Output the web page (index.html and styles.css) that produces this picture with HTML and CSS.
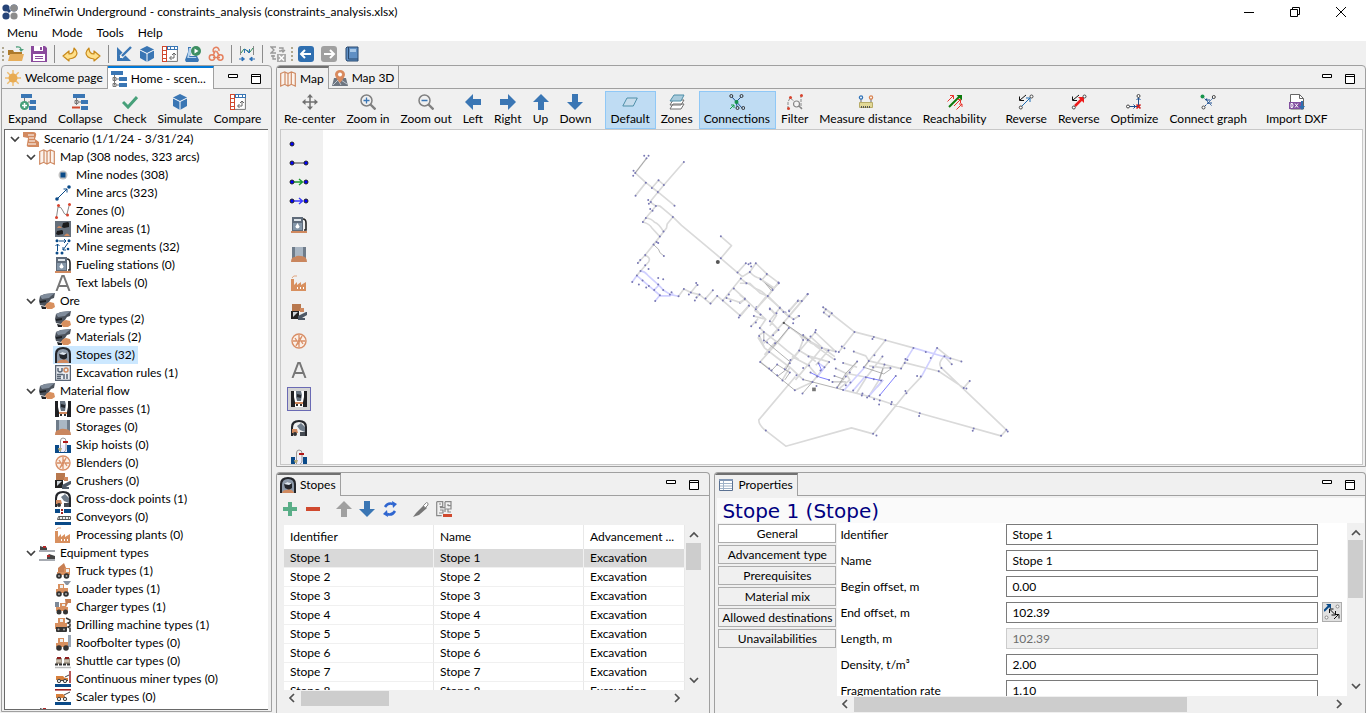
FILE: index.html
```html
<!DOCTYPE html>
<html lang="en">
<head>
<meta charset="utf-8">
<title>MineTwin Underground - constraints_analysis (constraints_analysis.xlsx)</title>
<link rel="stylesheet" href="styles.css">
</head>
<body>
<svg class="sprite" aria-hidden="true">
<symbol id="logo" viewBox="0 0 16 16"><circle cx="4" cy="4" r="3.6" fill="#264478"/><circle cx="12" cy="4" r="3.6" fill="#264478"/><circle cx="4" cy="12" r="3.6" fill="#264478"/><circle cx="12" cy="12" r="3.6" fill="#8c8c8c"/><circle cx="12" cy="4" r="3.6" fill="#8c8c8c"/><path d="M4 4l4 4" stroke="#264478" stroke-width="3"/></symbol>
<symbol id="open" viewBox="0 0 16 16"><path d="M0 4h5l1 2h8v3H0z" fill="#ad7a2c"/><path d="M0 15l2-7h14l-2 7z" fill="#e6ae5c"/><path d="M8 1q5-1 5 3" fill="none" stroke="#4f9f7c" stroke-width="1.3"/><path d="M11 3h5l-3 3z" fill="#4f9f7c"/></symbol>
<symbol id="save" viewBox="0 0 16 16"><path d="M0 0h14l2 2v14H0z" fill="#8a4a9c"/><path d="M3 0h9v5H3zM2 8h12v7H2z" fill="#fff"/><path d="M9 1h2v3H9z" fill="#8a4a9c"/><path d="M4 10.500h8M4 12.500h8" stroke="#8a4a9c"/></symbol>
<symbol id="undo" viewBox="0 0 16 16"><path d="M1 10l6-5v3q5 0 5-6 3 3 3 5 0 5-8 6v2z" fill="#ffe08a" stroke="#c88a1c" stroke-width="1.200" stroke-linejoin="round"/></symbol>
<symbol id="redo" viewBox="0 0 16 16"><path d="M15 10L9 5v3Q4 8 4 2 1 5 1 7q0 5 8 6v2z" fill="#ffe08a" stroke="#c88a1c" stroke-width="1.200" stroke-linejoin="round"/></symbol>
<symbol id="design" viewBox="0 0 16 16"><path d="M1 1l14 14H1zM4 9v3h3z" fill="#3a76b4" fill-rule="evenodd"/><path d="M15 1L5 11" stroke="#f0f0f0" stroke-width="4"/><path d="M15 1L6 10" stroke="#3a76b4" stroke-width="2.400"/></symbol>
<symbol id="cube" viewBox="0 0 16 16"><path d="M8 0l7 3.500v8.500l-7 4-7-4V3.500z" fill="#3a76b4"/><path d="M1 4l7 3.500L15 4M8 7.500V16" fill="none" stroke="#fff" stroke-width="1"/></symbol>
<symbol id="compare" viewBox="0 0 16 16"><path d="M.6.6h14.800v14.800H.6z" fill="#fff" stroke="#777"/><path d="M0 0h5v16H0z" fill="#d0492e"/><path d="M5 0h11v4H5z" fill="#3a76b4"/><path d="M1 1h3v3H1zM1 5h3v3H1zM1 9h3v3H1zM1 13h3v2H1zM6 1h2v2H6zM9 1h3v2H9zM13 1h2v2h-2z" fill="#fff"/><path d="M8 12h4V7M10 9l2-2 2 2M9.500 10L7.500 12l2 2" fill="none" stroke="#666"/></symbol>
<symbol id="flask" viewBox="0 0 16 16"><path d="M3 1v5l-3 8 1 2h12l1-2-2-4H5L6 6V1zM3 1h4" fill="#3a76b4"/><path d="M4 2h2v5L4 11h7l1 2H2z" fill="#b8d4ee"/><path d="M2 12h10l1 3H1z" fill="#3a76b4"/><circle cx="11" cy="5" r="5" fill="#3d8f62"/><path d="M9.500 2.500L13.500 5l-4 2.500z" fill="#fff"/></symbol>
<symbol id="hook" viewBox="0 0 16 16"><g fill="none" stroke="#e5805f" stroke-width="1.500"><path d="M6 6.500A3 3 0 1 1 11 5"/><path d="M7.500 4.500L5 9.500"/><path d="M8.500 5l3 5"/><circle cx="4" cy="11.500" r="2.700"/><circle cx="12.300" cy="11.500" r="2.700"/><path d="M5 11.500h7"/></g></symbol>
<symbol id="link" viewBox="0 0 16 16"><path d="M1.500 0v9M14.500 0v9" stroke="#888"/><path d="M2 7l3-4 6 3 3-4" fill="none" stroke="#2f8f5b"/><path d="M5.500 3v4M10.500 3v4M6 3l4 4" stroke="#2f72b8" fill="none"/><path d="M0 13h5M3 11l2.500 2L3 15zM16 13h-5M13 11l-2.500 2 2.500 2z" stroke="#2f72b8" fill="#2f72b8"/></symbol>
<symbol id="formula" viewBox="0 0 16 16"><path d="M6 1H1l3 3-3 3h5M9 2h4v3M11 4l2 2 2-2M9 5h2M3 9v4h3M1 10h4" fill="none" stroke="#999" stroke-width="1.300"/><path d="M7 8h9v8H7z" fill="#aaa"/><path d="M9 9.500l5 5M14 9.500l-5 5" stroke="#fff" stroke-width="1.500"/></symbol>
<symbol id="back" viewBox="0 0 16 16"><rect width="16" height="16" rx="3" fill="#2f6fb0"/><path d="M3 8h10M7 4L3 8l4 4" fill="none" stroke="#fff" stroke-width="2"/></symbol>
<symbol id="fwd" viewBox="0 0 16 16"><rect width="16" height="16" rx="3" fill="#a0a0a0"/><path d="M3 8h10M9 4l4 4-4 4" fill="none" stroke="#fff" stroke-width="2"/></symbol>
<symbol id="book" viewBox="0 0 16 16"><path d="M3 1h11v14H3q-1-1-1-2V2z" fill="#5f8fc4" stroke="#28486e"/><path d="M4.500 1v12H14" stroke="#28486e" fill="none"/><path d="M6 3h6v3H6z" fill="#a8c8e8"/></symbol>
<symbol id="sun" viewBox="0 0 16 16"><path d="M8 0v16M0 8h16M2.300 2.300l11.400 11.400M13.700 2.300L2.300 13.700" stroke="#edbc70" stroke-width="1.400"/><circle cx="8" cy="8" r="4.500" fill="#e8ab52"/></symbol>
<symbol id="home" viewBox="0 0 16 16"><path d="M0 0h12v4H0zM8 6h8v4H8zM8 12h8v4H8z" fill="#3a76b4"/><path d="M3.500 4v10.500M2 6.500h3v3H2zM2 12.500h3v3H2zM5 8h3M5 14h3" fill="#f4f4f4" stroke="#777"/></symbol>
<symbol id="expand" viewBox="0 0 16 16"><path d="M1 0h11v4H1zM10 6h6v4h-6zM9 12h7v4H9z" fill="#3a76b4"/><path d="M4.500 4v3M8 8h2" stroke="#777"/><circle cx="4.500" cy="11.500" r="4.500" fill="#47a07a"/><path d="M4.500 9v5M2 11.500h5" stroke="#fff" stroke-width="1.500"/></symbol>
<symbol id="collapse" viewBox="0 0 16 16"><path d="M1 0h12v4H1zM9 6h7v4H9zM9 12h7v4H9z" fill="#3a76b4"/><path d="M4.500 4v7M3 6.500h3v3H3zM6 8h3" fill="#f4f4f4" stroke="#777"/><path d="M0 12.500h8v2H0z" fill="#d0492e"/></symbol>
<symbol id="check" viewBox="0 0 16 16"><path d="M1 8l5 5 9-10" fill="none" stroke="#47a07a" stroke-width="3"/></symbol>
<symbol id="map" viewBox="0 0 16 16"><path d="M.7 2.500l4-1.700 3.300 1.700 3.300-1.700 4 1.700v12.500l-4-1.700-3.300 1.700-3.300-1.700-4 1.700zM5 1v12M8 2.500v12M11.300 1v12" fill="#fbf3ed" stroke="#cf8a62" stroke-width="1.200"/></symbol>
<symbol id="pin" viewBox="0 0 16 16"><path d="M2 8h12l2 8H0z" fill="#6d7580"/><path d="M1 15l5-5 3 5M9 10l6 4" stroke="#c0c8d0" fill="none"/><path d="M8 13Q3 7 3 4.500a5 4.500 0 0 1 10 0Q13 7 8 13z" fill="#d98a5e"/><circle cx="8" cy="4.500" r="2" fill="#fff"/></symbol>
<symbol id="move" viewBox="0 0 16 16"><path d="M8 1v14M1 8h14" stroke="#707070" stroke-width="1.500"/><path d="M8 0l3 3.500H5zM8 16l3-3.500H5zM0 8l3.500-3v6zM16 8l-3.500-3v6z" fill="#707070"/></symbol>
<symbol id="zin" viewBox="0 0 16 16"><circle cx="6.500" cy="6.500" r="5.500" fill="none" stroke="#808080" stroke-width="1.500"/><path d="M10.500 10.500l5 5" stroke="#808080" stroke-width="2.400"/><path d="M6.500 3.500v6M3.500 6.500h6" stroke="#3a76b4" stroke-width="1.300"/></symbol>
<symbol id="zout" viewBox="0 0 16 16"><circle cx="6.500" cy="6.500" r="5.500" fill="none" stroke="#808080" stroke-width="1.500"/><path d="M10.500 10.500l5 5" stroke="#808080" stroke-width="2.400"/><path d="M3.500 6.500h6" stroke="#3a76b4" stroke-width="1.300"/></symbol>
<symbol id="left" viewBox="0 0 16 16"><path d="M0 8l8-8v5h8v6H8v5z" fill="#3a76b4"/></symbol>
<symbol id="right" viewBox="0 0 16 16"><path d="M16 8L8 0v5H0v6h8v5z" fill="#3a76b4"/></symbol>
<symbol id="up" viewBox="0 0 16 16"><path d="M8 0l8 8h-5v8H5V8H0z" fill="currentColor"/></symbol>
<symbol id="down" viewBox="0 0 16 16"><path d="M8 16l8-8h-5V0H5v8H0z" fill="#3a76b4"/></symbol>
<symbol id="default" viewBox="0 0 16 16"><path d="M5 4h10.300l-4 8H.8z" fill="#c6dcec" stroke="#4f8fa8"/></symbol>
<symbol id="layers" viewBox="0 0 16 16"><g stroke="#707070" fill="#fff"><path d="M4 10h11l-3 5H1zM4 6h11l-3 5H1z"/><path d="M5 1h10l-3 6H1z" fill="#a9cbdc" stroke="#4f8fa8"/></g></symbol>
<symbol id="conn" viewBox="0 0 16 16"><path d="M2.500 2.500l11 12M12.500 2.500L7 8l1.500 6" stroke="#1d4f90" fill="none"/><g fill="#bfdcf3" stroke="#333"><circle cx="2.300" cy="2" r="1.500"/><circle cx="12.500" cy="2" r="1.500"/><circle cx="8.500" cy="14" r="1.500"/><circle cx="14.300" cy="14" r="1.500"/></g><circle cx="7.500" cy="8" r="2" fill="#16934b"/><path d="M1 15l4-4M2 11h3v3" stroke="#16a34b" fill="none"/></symbol>
<symbol id="filter" viewBox="0 0 16 16"><path d="M1 15V8l2-4 4 3M14 1v13" stroke="#888" fill="none" stroke-dasharray="3 1"/><circle cx="9.500" cy="10" r="3" fill="#f4f4f4" stroke="#888" stroke-width="1.200"/><path d="M12 12l3 3" stroke="#888" stroke-width="1.500"/><g fill="#d8442e"><circle cx="1.500" cy="14.500" r="1.500"/><circle cx="3.500" cy="3.500" r="1.500"/><circle cx="14.500" cy="1.500" r="1.500"/></g></symbol>
<symbol id="measure" viewBox="0 0 16 16"><path d="M3 4v4M13 4v4" stroke="#666"/><circle cx="3" cy="3.500" r="1.600" fill="#fff" stroke="#2f72b8" stroke-width="1.300"/><circle cx="13" cy="3.500" r="1.600" fill="#fff" stroke="#d9824f" stroke-width="1.300"/><path d="M1.500 8.500h13v5h-13z" fill="#e2d896" stroke="#b8ac68"/><path d="M3.500 14v-2M5.500 14v-2M7.500 14v-2M9.500 14v-2M11.500 14v-2" stroke="#555"/></symbol>
<symbol id="reach" viewBox="0 0 16 16"><path d="M2 13L13 2" stroke="#0c7a0c" stroke-width="2"/><path d="M9.500 1H15v5.500z" fill="#0c7a0c"/><path d="M.5 7.500l6-6M3 1.500h3.500V5M7 12l6.500-6.500M10.500 5.500h3V9M9.500 15.500l5.500-5.500M12 10h3v3" fill="none" stroke="#e8322a"/></symbol>
<symbol id="rev" viewBox="0 0 16 16"><path d="M4 12l8-8M8 4h4v4" fill="none" stroke="#1d6ab0"/><path d="M8 1L2 6M1.500 2.500V6.500H6" fill="none" stroke="#111"/><circle cx="2.800" cy="13.500" r="1.500" fill="#fff" stroke="#444"/><circle cx="13.500" cy="2.500" r="1.500" fill="#fff" stroke="#444"/></symbol>
<symbol id="revred" viewBox="0 0 16 16"><path d="M4 12l7-7" stroke="#ee1c1c" stroke-width="2.500"/><path d="M7 3h6v6z" fill="#ee1c1c"/><path d="M8 1L2 6M1.500 2.500V6.500H6" fill="none" stroke="#111"/><circle cx="2.800" cy="13.500" r="1.500" fill="#fff" stroke="#444"/><circle cx="13.500" cy="2.500" r="1.500" fill="#fff" stroke="#444"/></symbol>
<symbol id="optimize" viewBox="0 0 16 16"><path d="M12.500 3v9M2 12.500h10M10.500 6l2-2 2 2M7.500 10.500l2 2-2 2" fill="none" stroke="#1d4f90"/><circle cx="12.500" cy="2" r="1.500" fill="#fff" stroke="#444"/><circle cx="2" cy="12.500" r="1.500" fill="#fff" stroke="#444"/><path d="M10.500 10.500l4 4M14.500 10.500l-4 4" stroke="#d02020" stroke-width="1.700"/></symbol>
<symbol id="cgraph" viewBox="0 0 16 16"><path d="M3 3l9 9M5 12l8-8M7 9h5M9 5v6" stroke="#1d4f90" stroke-dasharray="2 1"/><path d="M5 6l3 1-1-3z" fill="#1d4f90"/><circle cx="2.500" cy="2.500" r="2" fill="#16934b"/><circle cx="3.500" cy="13.500" r="1.500" fill="#fff" stroke="#444"/><circle cx="13.800" cy="3" r="1.500" fill="#fff" stroke="#444"/></symbol>
<symbol id="dxf" viewBox="0 0 16 16"><path d="M1.500.5h9l4 4V15h-13z" fill="#fff" stroke="#666"/><path d="M10.500.5v4h4" fill="none" stroke="#666"/><path d="M0 8h14v7H0z" fill="#8250a0"/><path d="M2 9.500v4h1.500q1-2 0-4zM6 9.500l3 4M9 9.500l-3 4" stroke="#fff" fill="none"/><path d="M12 7h2v5h2l-3 4-3-4h2z" fill="#2f6fb0"/></symbol>
<symbol id="scroll" viewBox="0 0 16 16"><path d="M0 1h10q4 0 3 4l-1 3 4 3v5H6q-3 0-2-3l1-6-5-1z" fill="#d28a60"/><path d="M5 4h6M6 7h5M6 10h6M5 13h8" stroke="#fff"/></symbol>
<symbol id="node" viewBox="0 0 16 16"><circle cx="8" cy="8" r="4.500" fill="#c2c2c2"/><path d="M5.500 5.500h5v5h-5z" fill="#0a4a88"/></symbol>
<symbol id="arc" viewBox="0 0 16 16"><path d="M2 14L12 4M8.500 4H12v3.500" stroke="#0a4a88" stroke-width="1" fill="none"/><circle cx="2" cy="14" r="1.800" fill="#0a4a88"/><circle cx="14" cy="2" r="1.800" fill="#0a4a88"/></symbol>
<symbol id="zone" viewBox="0 0 16 16"><path d="M1.500 14L3 4q3-1 5 4t4 3l2-8" fill="none" stroke="#888"/><g fill="#d8442e"><circle cx="1.500" cy="14.500" r="1.500"/><circle cx="3.500" cy="2.500" r="1.500"/><circle cx="12.500" cy="12" r="1.500"/><circle cx="14.500" cy="1.500" r="1.500"/></g></symbol>
<symbol id="area" viewBox="0 0 16 16"><path d="M0 0h16v16H0z" fill="#66707c"/><path d="M8 2l5-1 1 1v4l-5 1-2-1zM2 10l5-1 1 1v3l-5 1-2-1z" fill="#1c1c1e"/><path d="M2 7q2-4 5 0zM9 15q3-5 6 0z" fill="#d08a60"/></symbol>
<symbol id="segment" viewBox="0 0 16 16"><path d="M4 2h7M9 0l2 2-2 2M2.500 12V5M.5 7l2-2 2 2M13 4L8 11M8 8v3h3" stroke="#0a4a88" fill="none" stroke-width="1"/><g fill="#0a4a88"><circle cx="2" cy="1.800" r="1.500"/><circle cx="14" cy="1.800" r="1.500"/><circle cx="2" cy="14" r="1.500"/><circle cx="7" cy="14" r="1.500"/><circle cx="13" cy="10" r="1.300"/></g></symbol>
<symbol id="fuel" viewBox="0 0 16 16"><path d="M0 14h16v2H0z" fill="#d08a60"/><path d="M1 0h11v14H1z" fill="#5f6b7a"/><path d="M3 2h7v2H3z" fill="#dfe5ea"/><path d="M2 6h9v7H2z" fill="#8496a8"/><path d="M6.500 6l2 3.500a2 2 0 1 1-4 0z" fill="#fff"/><path d="M12 2q3 0 3 4v7h-2" fill="none" stroke="#222" stroke-width="1.600"/></symbol>
<symbol id="letter" viewBox="0 0 16 16"><path d="M1.500 16L7.200 1h1.600l5.700 15M4 11h8" fill="none" stroke="#777" stroke-width="2"/></symbol>
<symbol id="ore" viewBox="0 0 16 16"><path d="M1 3l5-2 10-1-1 5-3 1-2 3-4 4-5-1-1-4z" fill="#4b525c"/><path d="M1 3l5-2 10-1-4 3-2 2-7 1z" fill="#808c9b"/><path d="M1 8l6-1v2l-6 1zM2 13l5 1v2H3z" fill="#1e2024"/><path d="M6 13l2-3 3-1 4 1 1 4-3 2H8z" fill="#d8905f"/></symbol>
<symbol id="stope" viewBox="0 0 16 16"><path d="M0 16V7q0-7 8-7t8 7v9z" fill="#24262b"/><path d="M2 16V8q0-6 6-6t6 6v8z" fill="#8d9aaa"/><path d="M4 7l3-2 5 1v5l-3 2-4-2z" fill="#23262c"/><path d="M4 7l3-2 5 1-3 2z" fill="#dfe8f2"/><path d="M2 16q1-3 4-3 6-2 8 3z" fill="#d08a60"/></symbol>
<symbol id="rules" viewBox="0 0 16 16"><path d="M.6.6h14.800v14.800H.6z" fill="#e9edf2" stroke="#5b6675" stroke-width="1.300"/><path d="M3 3v3q2 2 4 0V3M2 9.500h6M2 11.500h4M2 13.500h4M9 9v5M12 9v5" fill="none" stroke="#5b6675" stroke-width="1.500"/><circle cx="11" cy="5" r="2" fill="none" stroke="#d08a60" stroke-width="1.500"/></symbol>
<symbol id="pass" viewBox="0 0 16 16"><path d="M0 0h16v16H0z" fill="#fff"/><path d="M0 0h3v6l1 5v5H0zM16 0h-3v6l-1 5v5h4z" fill="#1e1f22"/><path d="M5 0h5l1 4-1 6H6L5 6z" fill="#66727f"/><path d="M6 3l4 1v3l-4-1z" fill="#23262c"/><path d="M4 11h8v2H4z" fill="#d08a60"/><path d="M5 13h2v2H5zM9 13h2v2H9z" fill="#333"/></symbol>
<symbol id="storage" viewBox="0 0 16 16"><path d="M1 1h14v12H1z" fill="#6f7c8a"/><path d="M4 1h8v11H4z" fill="#aab7c4"/><path d="M0 16q0-5 4-5 2-2 6-1 6 0 6 6z" fill="#c9865e"/></symbol>
<symbol id="skip" viewBox="0 0 16 16"><path d="M0 8h16v8H0z" fill="#0a4a88"/><path d="M4 8h8v7H4z" fill="#eef"/><path d="M5.500 15V4q0-3 2.500-3 3 0 3 3v8q0 2-2 3" fill="none" stroke="#999"/><path d="M8 4h5v2H8z" fill="#b01818"/><path d="M3 11h4l-1 3H4z" fill="#b8ac78"/></symbol>
<symbol id="blender" viewBox="0 0 16 16"><circle cx="8" cy="8" r="7" fill="#fbf0e8" stroke="#d88e66" stroke-width="1.400"/><path d="M8 2v4l3-2M14 8h-4l2 3M8 14v-4l-3 2M2 8h4L4 5M11 3l-2 4M5 13l2-4" stroke="#d88e66" stroke-width="1.300" fill="none"/><circle cx="8" cy="8" r="1.500" fill="#d88e66"/></symbol>
<symbol id="crusher" viewBox="0 0 16 16"><path d="M1 0h9v7H1z" fill="#b8784e"/><path d="M9 4h4v4H9z" fill="#d08a60"/><path d="M0 7h8v8H0z" fill="#222"/><path d="M2 13l5-5H2z" fill="#cfd5da"/><path d="M7 12l8-4h1v3l-5 3h3v2H7z" fill="#4e5966"/></symbol>
<symbol id="dock" viewBox="0 0 16 16"><path d="M0 16V7q0-7 8-7t8 7v9h-2V8q0-6-6-6T2 8v8z" fill="#24262b"/><path d="M6 6l4-3 4 4v5L9 10z" fill="#6f7c8a"/><path d="M1 9h5l1 4H1z" fill="#d08a60"/><circle cx="4" cy="14" r="2" fill="#333"/><path d="M9 12h5v4H9z" fill="#454a52"/></symbol>
<symbol id="conveyor" viewBox="0 0 16 16"><path d="M0 0h16v4H0zM0 13h16v3H0z" fill="#0a4a88"/><path d="M5 0h4v5H5z" fill="#fff"/><path d="M6 0h2v2H6zM6 3h2v2H6z" fill="#a02020"/><path d="M3.500 7.500h12v3h-13z" fill="#eee" stroke="#555"/><path d="M4 9h11" stroke="#777" stroke-width="2" stroke-dasharray="1 2"/></symbol>
<symbol id="plant" viewBox="0 0 16 16"><path d="M0 16V4h3v6l3-3v3l4-3v3l5-3v9z" fill="#d8905f"/><path d="M1 3q1-3 5-2" fill="none" stroke="#e0a580"/><path d="M6 12h1v2H6zM9 12h1v2H9zM12 12h1v2h-1z" fill="#fff"/></symbol>
<symbol id="equip" viewBox="0 0 16 16"><path d="M0 6h16M0 15h16" stroke="#8b9099" stroke-width="1.500"/><path d="M1 1l3 1 2-1 2 2v2H1zM8 11l2-2 3 1 3 1v3H8z" fill="#444"/><path d="M4 1h3v2H4zM8 10h3v2H8z" fill="#b02828"/></symbol>
<symbol id="truck" viewBox="0 0 16 16"><path d="M3 5l6-5 2 5-1 5H3z" fill="#c87f52"/><path d="M9 5h6v7H2V9h7z" fill="#d8905f"/><path d="M11 6h3v3h-3z" fill="#eee"/><circle cx="4" cy="13" r="2.800" fill="#333"/><circle cx="11.500" cy="13" r="2.800" fill="#333"/><circle cx="4" cy="13" r="1" fill="#aaa"/><circle cx="11.500" cy="13" r="1" fill="#aaa"/></symbol>
<symbol id="loader" viewBox="0 0 16 16"><path d="M3 3h6v4h4v5H1V8h2z" fill="#d8905f"/><path d="M5 4h3v3H5z" fill="#eee"/><path d="M8 0h8l-3 4h-2z" fill="#8a94a2"/><circle cx="4" cy="13" r="2.800" fill="#333"/><circle cx="11" cy="13" r="2.800" fill="#333"/><circle cx="4" cy="13" r="1" fill="#aaa"/><circle cx="11" cy="13" r="1" fill="#aaa"/></symbol>
<symbol id="charger" viewBox="0 0 16 16"><path d="M5 4h6v4h2v4H1V8h4z" fill="#d8905f"/><path d="M0 3h4v5H0z" fill="#7d8998"/><path d="M10 0h6v4h-3l-2 4" fill="#c87f52"/><path d="M7 5h3v2H7z" fill="#eee"/><circle cx="4" cy="13" r="2.500" fill="#333"/><circle cx="10.500" cy="13" r="2.500" fill="#333"/></symbol>
<symbol id="drill" viewBox="0 0 16 16"><path d="M3 1h7v5h2v6H0V6h3z" fill="#d8905f"/><path d="M5 2h3v3H5z" fill="#eee"/><path d="M1 10h11v4q0 1-1 1H2q-1 0-1-1z" fill="#333"/><circle cx="3.500" cy="12.500" r="1" fill="#aaa"/><circle cx="9" cy="12.500" r="1" fill="#aaa"/><path d="M11 1l4 2v2l-2 1 2 1v2l-2 1 2 1v4" stroke="#333" stroke-width="1.500" fill="none"/></symbol>
<symbol id="bolter" viewBox="0 0 16 16"><path d="M3 3h6v4h4v5H1V8h2z" fill="#d8905f"/><path d="M5 4h3v3H5z" fill="#eee"/><path d="M13 0h3v12h-3z" fill="#9aa6b4"/><circle cx="4" cy="13" r="2.800" fill="#333"/><circle cx="11" cy="13" r="2.800" fill="#333"/></symbol>
<symbol id="shuttle" viewBox="0 0 16 16"><path d="M1 5h6v6H1zM9 5h6v6H9z" fill="#a89c8c"/><path d="M2 4h4v2H2zM10 4h4v2h-4z" fill="#8c1c1c"/><path d="M1 8h5M9 8h5" stroke="#e8e0d0"/><path d="M0 11.500h16" stroke="#333" stroke-width="2" stroke-dasharray="3 1"/><path d="M0 14.500h16" stroke="#bbb" stroke-width="1.500"/></symbol>
<symbol id="miner" viewBox="0 0 16 16"><path d="M0 13h16v3H0z" fill="#0a4a88"/><path d="M15 0v12" stroke="#a02020" stroke-width="1.500"/><path d="M1 5h7l2 2h3v2H1z" fill="#d8803c"/><path d="M2 9.500h11" stroke="#444"/><circle cx="4" cy="10" r="1.700" fill="#ddd" stroke="#444"/><circle cx="10" cy="10" r="1.700" fill="#ddd" stroke="#444"/><path d="M10 6l4-2" stroke="#444"/></symbol>
<symbol id="scaler" viewBox="0 0 16 16"><path d="M0 13h16v3H0z" fill="#0a4a88"/><path d="M0 .800h16" stroke="#a02020" stroke-width="1.600"/><path d="M1 5h7l2 2v2H1z" fill="#d8803c"/><circle cx="4" cy="10" r="1.700" fill="#ddd" stroke="#444"/><circle cx="10" cy="10" r="1.700" fill="#ddd" stroke="#444"/><path d="M9 6l6-3" stroke="#444"/></symbol>
<symbol id="pnode" viewBox="0 0 20 8"><circle cx="3" cy="4" r="2" fill="#00f" stroke="#222"/></symbol>
<symbol id="parc" viewBox="0 0 20 8"><path d="M3 4h14" stroke="#777" stroke-width="1.600"/><circle cx="3" cy="4" r="2" fill="#00f" stroke="#222"/><circle cx="17" cy="4" r="2" fill="#00f" stroke="#222"/></symbol>
<symbol id="pdir" viewBox="0 0 20 8"><path d="M5 4h8M10 1l3.500 3L10 7" fill="none" stroke="currentColor" stroke-width="1.400"/><circle cx="3" cy="4" r="2" fill="#00f" stroke="#222"/><circle cx="17" cy="4" r="2" fill="#00f" stroke="#222"/></symbol>
<symbol id="plus" viewBox="0 0 16 16"><path d="M6 1h4v5h5v4h-5v5H6v-5H1V6h5z" fill="#5aae88"/></symbol>
<symbol id="minus" viewBox="0 0 16 16"><path d="M1 6h14v4H1z" fill="#d0492e"/></symbol>
<symbol id="refresh" viewBox="0 0 16 16"><path d="M3 6q3-5 8-3M13 10q-3 5-8 3" fill="none" stroke="#2f66d0" stroke-width="2.500"/><path d="M10 0l5 3-4 4zM6 16l-5-3 4-4z" fill="#2f66d0"/></symbol>
<symbol id="pencil" viewBox="0 0 16 16"><path d="M0 16l3-4L11 4l3 3-8 7z" fill="#777"/><path d="M10.500 4.500l3-3q2 0 1.500 2.500l-3 3z" fill="#fff" stroke="#888"/></symbol>
<symbol id="maze" viewBox="0 0 16 16"><path d="M.7.7h6v5h-3M9 .7h6v4h-3M9 .7v6H4M15 5v3H9v3M.7.7v14h5M4 9h3v3H3M12 3v2M3 3h2M12 8v3h3" fill="none" stroke="#888" stroke-width="1.200"/><path d="M7 13h9v3H7z" fill="#d0492e"/></symbol>
<symbol id="sheet" viewBox="0 0 16 16"><path d="M1.500 2.500h13v11h-13z" fill="#fff" stroke="#5a7192"/><path d="M1 2h14v2H1z" fill="#8297b4"/><path d="M2 6.500h12M2 9h12M2 11.500h12M5.500 4v9" stroke="#9fb2c8"/></symbol>
<symbol id="swap" viewBox="0 0 16 16"><path d="M0 7l5-5" stroke="#0a4a88" stroke-width="2"/><path d="M2 0h5v5z" fill="#0a4a88"/><path d="M6 5.500l5 5M5.500 9V5H9.500M7.500 11H11.500V7M10 15l4-4M11 10.500h4v4" fill="none" stroke="#111"/><circle cx="13.500" cy="2.500" r="1.500" fill="#fff" stroke="#888"/><circle cx="2.500" cy="13.500" r="1.500" fill="#fff" stroke="#888"/></symbol>
<symbol id="vmin" viewBox="0 0 12 12"><path d="M1.500 1.500h9v3h-9z" fill="#fff" stroke="#000"/></symbol>
<symbol id="vmax" viewBox="0 0 12 12"><path d="M1.500 1.500h9v9h-9z" fill="#fff" stroke="#000"/><path d="M1 3.500h10" stroke="#000"/></symbol>
<symbol id="wmin" viewBox="0 0 12 12"><path d="M1 6.500h10" stroke="#000"/></symbol>
<symbol id="wrest" viewBox="0 0 12 12"><path d="M1.500 3.500h7v7h-7zM3.500 3.500v-2h7v7h-2" fill="none" stroke="#000"/></symbol>
<symbol id="wclose" viewBox="0 0 12 12"><path d="M1 1l10 10M11 1L1 11" stroke="#000"/></symbol>
<symbol id="chev" viewBox="0 0 10 10"><path d="M1 3l4 4 4-4" fill="none" stroke="currentColor" stroke-width="1.700"/></symbol>
</svg>

<header class="titlebar">
  <svg class="icon"><use href="#logo"/></svg>
  <h1 class="app-title">MineTwin Underground - constraints_analysis (constraints_analysis.xlsx)</h1>
  <div class="window-buttons">
    <button aria-label="Minimize window"><svg><use href="#wmin"/></svg></button>
    <button aria-label="Restore window"><svg><use href="#wrest"/></svg></button>
    <button aria-label="Close window"><svg><use href="#wclose"/></svg></button>
  </div>
</header>
<nav class="menubar"><button>Menu</button><button>Mode</button><button>Tools</button><button>Help</button></nav>
<div class="toolbar" role="toolbar" aria-label="Main">
  <span class="grip"></span>
  <button aria-label="Open"><svg class="icon"><use href="#open"/></svg></button>
  <button aria-label="Save"><svg class="icon"><use href="#save"/></svg></button>
  <span class="sep"></span>
  <button aria-label="Undo"><svg class="icon"><use href="#undo"/></svg></button>
  <button aria-label="Redo"><svg class="icon"><use href="#redo"/></svg></button>
  <span class="sep"></span>
  <button aria-label="Design"><svg class="icon"><use href="#design"/></svg></button>
  <button aria-label="Simulate"><svg class="icon"><use href="#cube"/></svg></button>
  <button aria-label="Compare"><svg class="icon"><use href="#compare"/></svg></button>
  <button aria-label="Experiment"><svg class="icon"><use href="#flask"/></svg></button>
  <button aria-label="Integration"><svg class="icon"><use href="#hook"/></svg></button>
  <span class="sep"></span>
  <button aria-label="Connect"><svg class="icon"><use href="#link"/></svg></button>
  <span class="sep"></span>
  <button aria-label="Formula"><svg class="icon"><use href="#formula"/></svg></button>
  <span class="grip"></span>
  <button aria-label="Back"><svg class="icon"><use href="#back"/></svg></button>
  <button aria-label="Forward"><svg class="icon"><use href="#fwd"/></svg></button>
  <button aria-label="Manual"><svg class="icon"><use href="#book"/></svg></button>
</div>

<main class="workbench">
  <section class="view sidebar" aria-label="Home">
    <div class="tabs">
      <button class="tab"><svg class="icon"><use href="#sun"/></svg>Welcome page</button>
      <button class="tab active focused"><svg class="icon"><use href="#home"/></svg>Home - scen...</button>
      <span class="view-buttons"><button aria-label="Minimize"><svg><use href="#vmin"/></svg></button><button aria-label="Maximize"><svg><use href="#vmax"/></svg></button></span>
    </div>
    <div class="actions">
      <button><svg class="icon"><use href="#expand"/></svg>Expand</button>
      <button><svg class="icon"><use href="#collapse"/></svg>Collapse</button>
      <button><svg class="icon"><use href="#check"/></svg>Check</button>
      <button><svg class="icon"><use href="#cube"/></svg>Simulate</button>
      <button><svg class="icon"><use href="#compare"/></svg>Compare</button>
    </div>
    <div class="tree">
      <ul>
        <li><div class="row"><svg class="twist"><use href="#chev"/></svg><svg class="icon"><use href="#scroll"/></svg><span>Scenario (1/1/24 - 3/31/24)</span></div>
        <ul>
          <li><div class="row"><svg class="twist"><use href="#chev"/></svg><svg class="icon"><use href="#map"/></svg><span>Map (308 nodes, 323 arcs)</span></div>
            <ul>
              <li class="row leaf"><svg class="icon"><use href="#node"/></svg><span>Mine nodes (308)</span></li>
              <li class="row leaf"><svg class="icon"><use href="#arc"/></svg><span>Mine arcs (323)</span></li>
              <li class="row leaf"><svg class="icon"><use href="#zone"/></svg><span>Zones (0)</span></li>
              <li class="row leaf"><svg class="icon"><use href="#area"/></svg><span>Mine areas (1)</span></li>
              <li class="row leaf"><svg class="icon"><use href="#segment"/></svg><span>Mine segments (32)</span></li>
              <li class="row leaf"><svg class="icon"><use href="#fuel"/></svg><span>Fueling stations (0)</span></li>
              <li class="row leaf"><svg class="icon"><use href="#letter"/></svg><span>Text labels (0)</span></li>
            </ul></li>
          <li><div class="row"><svg class="twist"><use href="#chev"/></svg><svg class="icon"><use href="#ore"/></svg><span>Ore</span></div>
            <ul>
              <li class="row leaf"><svg class="icon"><use href="#ore"/></svg><span>Ore types (2)</span></li>
              <li class="row leaf"><svg class="icon"><use href="#ore"/></svg><span>Materials (2)</span></li>
              <li class="row leaf selected"><svg class="icon"><use href="#stope"/></svg><span>Stopes (32)</span></li>
              <li class="row leaf"><svg class="icon"><use href="#rules"/></svg><span>Excavation rules (1)</span></li>
            </ul></li>
          <li><div class="row"><svg class="twist"><use href="#chev"/></svg><svg class="icon"><use href="#ore"/></svg><span>Material flow</span></div>
            <ul>
              <li class="row leaf"><svg class="icon"><use href="#pass"/></svg><span>Ore passes (1)</span></li>
              <li class="row leaf"><svg class="icon"><use href="#storage"/></svg><span>Storages (0)</span></li>
              <li class="row leaf"><svg class="icon"><use href="#skip"/></svg><span>Skip hoists (0)</span></li>
              <li class="row leaf"><svg class="icon"><use href="#blender"/></svg><span>Blenders (0)</span></li>
              <li class="row leaf"><svg class="icon"><use href="#crusher"/></svg><span>Crushers (0)</span></li>
              <li class="row leaf"><svg class="icon"><use href="#dock"/></svg><span>Cross-dock points (1)</span></li>
              <li class="row leaf"><svg class="icon"><use href="#conveyor"/></svg><span>Conveyors (0)</span></li>
              <li class="row leaf"><svg class="icon"><use href="#plant"/></svg><span>Processing plants (0)</span></li>
            </ul></li>
          <li><div class="row"><svg class="twist"><use href="#chev"/></svg><svg class="icon"><use href="#equip"/></svg><span>Equipment types</span></div>
            <ul>
              <li class="row leaf"><svg class="icon"><use href="#truck"/></svg><span>Truck types (1)</span></li>
              <li class="row leaf"><svg class="icon"><use href="#loader"/></svg><span>Loader types (1)</span></li>
              <li class="row leaf"><svg class="icon"><use href="#charger"/></svg><span>Charger types (1)</span></li>
              <li class="row leaf"><svg class="icon"><use href="#drill"/></svg><span>Drilling machine types (1)</span></li>
              <li class="row leaf"><svg class="icon"><use href="#bolter"/></svg><span>Roofbolter types (0)</span></li>
              <li class="row leaf"><svg class="icon"><use href="#shuttle"/></svg><span>Shuttle car types (0)</span></li>
              <li class="row leaf"><svg class="icon"><use href="#miner"/></svg><span>Continuous miner types (0)</span></li>
              <li class="row leaf"><svg class="icon"><use href="#scaler"/></svg><span>Scaler types (0)</span></li>
            </ul></li>
          <li><div class="row"><svg class="twist"><use href="#chev"/></svg><svg class="icon"><use href="#equip"/></svg></div></li>
        </ul></li>
      </ul>
    </div>
  </section>

  <div class="editors">
    <section class="view map-view" aria-label="Map">
      <div class="tabs">
        <button class="tab active"><svg class="icon"><use href="#map"/></svg>Map</button>
        <button class="tab"><svg class="icon"><use href="#pin"/></svg>Map 3D</button>
        <span class="view-buttons"><button aria-label="Minimize"><svg><use href="#vmin"/></svg></button><button aria-label="Maximize"><svg><use href="#vmax"/></svg></button></span>
      </div>
      <div class="actions">
        <button><svg class="icon"><use href="#move"/></svg>Re-center</button>
        <button><svg class="icon"><use href="#zin"/></svg>Zoom in</button>
        <button><svg class="icon"><use href="#zout"/></svg>Zoom out</button>
        <button><svg class="icon"><use href="#left"/></svg>Left</button>
        <button><svg class="icon"><use href="#right"/></svg>Right</button>
        <button><svg class="icon blue"><use href="#up"/></svg>Up</button>
        <button><svg class="icon"><use href="#down"/></svg>Down</button>
        <span class="gap"></span>
        <button class="pressed"><svg class="icon"><use href="#default"/></svg>Default</button>
        <button><svg class="icon"><use href="#layers"/></svg>Zones</button>
        <button class="pressed"><svg class="icon"><use href="#conn"/></svg>Connections</button>
        <button><svg class="icon"><use href="#filter"/></svg>Filter</button>
        <button><svg class="icon"><use href="#measure"/></svg>Measure distance</button>
        <button><svg class="icon"><use href="#reach"/></svg>Reachability</button>
        <span class="gap"></span>
        <button><svg class="icon"><use href="#rev"/></svg>Reverse</button>
        <button><svg class="icon"><use href="#revred"/></svg>Reverse</button>
        <button><svg class="icon"><use href="#optimize"/></svg>Optimize</button>
        <button><svg class="icon"><use href="#cgraph"/></svg>Connect graph</button>
        <span class="gap"></span>
        <button><svg class="icon"><use href="#dxf"/></svg>Import DXF</button>
      </div>
      <div class="canvas">
        <div class="palette" role="toolbar" aria-label="Map objects">
          <button class="prim" aria-label="Node"><svg class="wide"><use href="#pnode"/></svg></button>
          <button class="prim" aria-label="Arc"><svg class="wide"><use href="#parc"/></svg></button>
          <button class="prim green" aria-label="One-way arc"><svg class="wide"><use href="#pdir"/></svg></button>
          <button class="prim indigo" aria-label="Directed arc"><svg class="wide"><use href="#pdir"/></svg></button>
          <button aria-label="Fueling station"><svg class="icon"><use href="#fuel"/></svg></button>
          <button aria-label="Storage"><svg class="icon"><use href="#storage"/></svg></button>
          <button aria-label="Processing plant"><svg class="icon"><use href="#plant"/></svg></button>
          <button aria-label="Crusher"><svg class="icon"><use href="#crusher"/></svg></button>
          <button aria-label="Blender"><svg class="icon"><use href="#blender"/></svg></button>
          <button aria-label="Text label"><svg class="icon"><use href="#letter"/></svg></button>
          <button class="chosen" aria-label="Ore pass"><svg class="icon"><use href="#pass"/></svg></button>
          <button aria-label="Cross-dock point"><svg class="icon"><use href="#dock"/></svg></button>
          <button aria-label="Skip hoist"><svg class="icon"><use href="#skip"/></svg></button>
        </div>
        <svg class="mine" viewBox="323 130 1036 334" preserveAspectRatio="xMinYMin meet" role="img" aria-label="Mine map">
          <g transform="translate(620 140) scale(.3333)">
            <path class="road" d="M80 55L46 99L78 128L114 156L164 197M192 66L132 135L90 186L108 198Q118 194 126 203L159 231L185 256L303 355L353 398L368 410L390 396M78 128L47 167M96 144L116 121L132 135M108 198L78 234L69 246Q90 252 96 264L120 290M78 234Q96 236 104 247Q116 250 131 275M159 231L142 252L140 264L101 314L76 345L54 369M76 345Q94 354 86 366L62 393L51 407M303 355L335 317L303 289M353 398L378 370M390 396L408 370L441 402L476 428L443 470M390 396Q404 412 420 415L460 448M363 416L380 430Q390 432 405 445Q428 452 440 468M363 416L309 482M441 402L428 418M342 446L375 476Q364 492 350 484L320 474M309 482L292 468L272 491L239 464L228 474M257 476L279 451M239 464L213 458L192 447L176 469M213 458L233 433M309 482L362 528L387 498M440 468L405 512L423 525M440 468L480 503L506 530L564 462M508 512L535 482M450 506L470 527"/>
            <path class="thin" d="M80 55L46 99M101 314L116 328L120 338L132 348M420 415L460 448L456 454L432 424"/>
            <path class="soft-blue" d="M62 393Q74 394 84 406L115 434L130 450L152 464L176 469M51 407L87 438L120 466L106 483M120 468H150L160 460M103 450L117 436M51 407L37 426"/>
            <path class="dots" d="M73 47h0M86 47h0M80 55h0M46 99h0M41 92h0M40 107h0M78 128h0M47 167h0M96 144h0M116 121h0M132 135h0M192 66h0M114 156h0M164 197h0M85 180h0M93 186h0M87 191h0M108 198h0M91 207h0M98 212h0M159 231h0M78 234h0M69 246h0M131 275h0M120 290h0M101 314h0M110 306h0M115 309h0M132 348h0M76 345h0M61 360h0M54 369h0M76 376h0M86 387h0M62 393h0M51 407h0M37 426h0M57 434h0M68 422h0M79 443h0M87 438h0M103 450h0M115 434h0M115 414h0M130 418h0M120 466h0M106 483h0M130 450h0M150 464h0M155 457h0M176 469h0M192 447h0M207 464h0M213 458h0M229 429h0M233 435h0M225 482h0M239 464h0M230 473h0M257 476h0M279 451h0M272 491h0M292 468h0M309 482h0M320 474h0M327 464h0M332 484h0M342 446h0M361 489h0M375 476h0M387 498h0M357 533h0M363 416h0M378 430h0M303 289h0M303 355h0M353 398h0M378 370h0M386 373h0M392 370h0M394 380h0M390 396h0M408 370h0M441 402h0M476 428h0M422 418h0M460 448h0M443 470h0M410 502h0M423 525h0M450 506h0M480 503h0M467 520h0M508 512h0M535 482h0M545 484h0M564 462h0M497 518h0M536 528h0"/>
            <circle cx="294" cy="366" r="6" fill="#555"/>
          </g>
          <g transform="translate(740 280) scale(.3333)">
            <path class="road" d="M344 156L250 82M252 98L268 110L276 100L258 88L252 98M344 156L402 171L437 181L521 204M614 229L665 245M344 156L297 216M437 181L387 243L375 262M497 243L484 266L387 243M497 249L597 274L672 324L690 303M545 290L498 340L400 462M592 204L632 236M614 229Q592 250 605 264L800 450L784 468L540 400L388 350L310 330M614 229L636 253M400 462L335 444L138 499L78 452Q56 436 57 420L167 290M61 246L95 272M61 246L118 182L147 144M0 70L15 57L48 88L62 104L78 118L60 144L72 156M48 88L84 48L120 84L131 96L148 109L203 44M148 94L174 63L186 63M161 118L178 108M161 118L131 96M34 139L55 116M148 109L131 128L90 174M131 128L180 165M40 108L78 118M72 156L58 166L74 204L110 232L150 262L190 299M72 156L106 182L142 212L178 240M120 84L90 122L116 150L72 190M94 88L110 106L90 138M180 165L215 190L246 204L288 215M180 165L190 180L178 212L150 245M226 157L180 212L135 265M226 157L288 215M212 170L250 205L285 230M190 165L230 200L285 240M204 180L246 204M246 204L167 300M178 212L206 228L228 245M156 230L206 256L230 285M266 212L228 256M206 228L267 246M267 246L218 306L165 331M150 262L128 300M74 204L54 172M110 182L74 225M340 215L378 228L387 243M428 230L380 292M288 266L318 280L380 292M310 249L352 262M352 245L292 323M318 280L330 300L300 325M388 258L430 264L452 264M434 254L418 300L388 348M380 292L350 340M430 300L412 322M0 10L30 10L62 40L84 48M103 24L84 48M66 0L103 24L117 10M0 45L15 57M0 107L27 77"/>
            <path class="thin" d="M61 246L165 331M95 272L112 254L150 278L135 300M72 156V180L150 245L138 270L112 290M147 144L100 200M131 128L212 184M190 299L310 330M188 341L218 306M292 323L318 280L352 245M276 306H318M284 288L312 298M372 262L432 282L455 266M388 243L372 262M430 264L418 300"/>
            <path class="soft-blue" d="M521 204L632 236M521 204L497 243M592 204L545 290M375 262L312 332M340 332L376 290M388 348L430 300M236 250L254 262L232 292"/>
            <path class="line-blue" d="M468 288L420 346M378 292L424 302M212 278L240 292L268 300M236 250L246 272"/>
            <path class="dots" d="M250 82h0M258 88h0M252 98h0M268 110h0M276 100h0M344 156h0M402 171h0M398 177h0M437 181h0M521 204h0M558 216h0M592 204h0M614 229h0M632 236h0M665 245h0M636 253h0M573 234h0M497 237h0M503 240h0M495 249h0M484 266h0M597 274h0M605 264h0M672 324h0M680 326h0M690 303h0M532 288h0M543 290h0M497 333h0M500 340h0M400 462h0M410 467h0M540 400h0M538 408h0M702 446h0M699 453h0M800 450h0M804 455h0M784 468h0M78 452h0M454 373h0M456 366h0M418 374h0M420 362h0M420 346h0M403 358h0M388 348h0M382 353h0M366 347h0M368 341h0M340 332h0M310 330h0M292 323h0M468 288h0M424 302h0M402 298h0M378 292h0M452 264h0M434 254h0M428 230h0M387 243h0M372 262h0M400 262h0M404 226h0M342 215h0M352 245h0M310 249h0M288 266h0M318 290h0M330 278h0M284 288h0M278 306h0M318 316h0M332 308h0M297 216h0M306 200h0M314 205h0M288 215h0M285 238h0M266 212h0M246 204h0M226 157h0M228 150h0M212 170h0M204 180h0M190 165h0M190 180h0M178 212h0M152 240h0M150 250h0M206 230h0M236 250h0M254 262h0M242 272h0M268 246h0M268 300h0M232 290h0M212 278h0M190 299h0M218 306h0M230 318h0M188 341h0M165 331h0M170 286h0M190 264h0M208 257h0M150 278h0M128 302h0M112 286h0M95 272h0M88 266h0M112 254h0M135 268h0M61 246h0M88 216h0M106 190h0M82 188h0M72 182h0M58 168h0M72 156h0M60 144h0M34 139h0M48 128h0M62 104h0M48 88h0M42 108h0M90 88h0M110 100h0M120 84h0M131 96h0M148 109h0M90 124h0M116 150h0M100 166h0M147 144h0M161 118h0M178 108h0M160 130h0M148 94h0M174 63h0M186 63h0M203 43h0M84 48h0M98 30h0M117 10h0M15 57h0M20 10h0M0 107h0M27 77h0"/>
            <path fill="#555" d="M129 126h6v6h-6z"/><path fill="#777" d="M217 323h11v11h-11z"/>
          </g>
        </svg>
      </div>
    </section>

    <div class="lower">
      <section class="view" aria-label="Stopes">
        <div class="tabs">
          <button class="tab active"><svg class="icon"><use href="#stope"/></svg>Stopes</button>
          <span class="view-buttons"><button aria-label="Minimize"><svg><use href="#vmin"/></svg></button><button aria-label="Maximize"><svg><use href="#vmax"/></svg></button></span>
        </div>
        <div class="toolbar list-tools" role="toolbar" aria-label="Stopes">
          <button aria-label="Add"><svg class="icon"><use href="#plus"/></svg></button>
          <button aria-label="Remove"><svg class="icon"><use href="#minus"/></svg></button>
          <span class="space"></span>
          <button aria-label="Move up"><svg class="icon gray"><use href="#up"/></svg></button>
          <button aria-label="Move down"><svg class="icon"><use href="#down"/></svg></button>
          <button aria-label="Refresh"><svg class="icon"><use href="#refresh"/></svg></button>
          <span class="space"></span>
          <button aria-label="Edit"><svg class="icon"><use href="#pencil"/></svg></button>
          <button aria-label="Clear layout"><svg class="icon"><use href="#maze"/></svg></button>
        </div>
        <div class="scroller table-scroller">
          <div class="viewport">
            <table>
              <thead><tr><th>Identifier</th><th>Name</th><th>Advancement ...</th></tr></thead>
              <tbody>
                <tr class="current"><td>Stope 1</td><td>Stope 1</td><td>Excavation</td></tr>
                <tr><td>Stope 2</td><td>Stope 2</td><td>Excavation</td></tr>
                <tr><td>Stope 3</td><td>Stope 3</td><td>Excavation</td></tr>
                <tr><td>Stope 4</td><td>Stope 4</td><td>Excavation</td></tr>
                <tr><td>Stope 5</td><td>Stope 5</td><td>Excavation</td></tr>
                <tr><td>Stope 6</td><td>Stope 6</td><td>Excavation</td></tr>
                <tr><td>Stope 7</td><td>Stope 7</td><td>Excavation</td></tr>
                <tr><td>Stope 8</td><td>Stope 8</td><td>Excavation</td></tr>
              </tbody>
            </table>
          </div>
          <div class="vbar"><svg class="flip"><use href="#chev"/></svg><span class="track"><i></i></span><svg><use href="#chev"/></svg></div>
          <div class="hbar"><svg class="west"><use href="#chev"/></svg><span class="track"><i></i></span><svg class="east"><use href="#chev"/></svg></div>
        </div>
      </section>

      <section class="view" aria-label="Properties">
        <div class="tabs">
          <button class="tab active"><svg class="icon"><use href="#sheet"/></svg>Properties</button>
          <span class="view-buttons"><button aria-label="Minimize"><svg><use href="#vmin"/></svg></button><button aria-label="Maximize"><svg><use href="#vmax"/></svg></button></span>
        </div>
        <div class="props">
          <h2>Stope 1 (Stope)</h2>
          <div class="props-body">
            <nav class="pages">
              <button class="on">General</button><button>Advancement type</button><button>Prerequisites</button><button>Material mix</button><button>Allowed destinations</button><button>Unavailabilities</button>
            </nav>
            <div class="scroller form-scroller">
              <form class="viewport form">
                <label for="f1">Identifier</label><input id="f1" value="Stope 1"><span></span>
                <label for="f2">Name</label><input id="f2" value="Stope 1"><span></span>
                <label for="f3">Begin offset, m</label><input id="f3" value="0.00"><span></span>
                <label for="f4">End offset, m</label><input id="f4" value="102.39"><button type="button" class="pick" aria-label="Swap ends"><svg class="icon"><use href="#swap"/></svg></button>
                <label for="f5">Length, m</label><input id="f5" value="102.39" disabled><span></span>
                <label for="f6">Density, t/m³</label><input id="f6" value="2.00"><span></span>
                <label for="f7">Fragmentation rate</label><input id="f7" value="1.10"><span></span>
              </form>
              <div class="vbar"><svg class="flip"><use href="#chev"/></svg><span class="track"><i></i></span><svg><use href="#chev"/></svg></div>
              <div class="hbar"><svg class="west"><use href="#chev"/></svg><span class="track"><i></i></span><svg class="east"><use href="#chev"/></svg></div>
            </div>
          </div>
        </div>
      </section>
    </div>
  </div>
</main>
</body>
</html>
```
FILE: styles.css
```css
* { box-sizing: border-box; }

body {
  margin: 0;
  height: 100vh;
  display: flex;
  flex-direction: column;
  overflow: hidden;
  background: #f0f0f0;
  color: #000;
  font: 12px/16px Lato, "Open Sans", sans-serif;
}

button, input { font: inherit; color: inherit; margin: 0; }
button { padding: 0; border: 0; background: none; white-space: nowrap; }
svg { display: block; flex: none; }
ul { list-style: none; margin: 0; padding: 0; }

.sprite { position: absolute; width: 0; height: 0; }
.icon { width: 16px; height: 16px; }
.blue { color: #3a76b4; }
.gray { color: #a0a0a0; }

/* Window frame */
.titlebar { flex: none; height: 24px; display: flex; align-items: center; gap: 5px; padding: 0 2px; background: #fff; }
.app-title { margin: 0; font-size: 12px; font-weight: 400; }
.window-buttons { margin-left: auto; display: flex; height: 20px; }
.window-buttons button { width: 46px; display: grid; place-items: center; }
.window-buttons svg { width: 12px; height: 12px; }
.menubar { flex: none; height: 17px; display: flex; gap: 14px; padding-left: 7px; background: #fff; }

.toolbar { flex: none; height: 24px; display: flex; align-items: center; gap: 7px; padding: 1px 2px 0; }
.toolbar .grip { width: 2px; height: 14px; margin-right: -3px; background: repeating-linear-gradient(#b0a890 0 2px, transparent 2px 4px); }
.toolbar .grip:not(:first-child) { margin-left: -2px; margin-right: -2px; }
.toolbar .sep { width: 1px; height: 18px; background: #8c8c8c; }

/* Workbench */
.workbench { flex: 1; min-height: 0; display: grid; grid-template-columns: 271px minmax(0, 1fr); gap: 4px; padding-left: 1px; }
.editors { min-height: 0; display: grid; grid-template-rows: minmax(0, 5fr) minmax(0, 3fr); gap: 5px; }
.lower { min-height: 0; display: grid; grid-template-columns: minmax(0, 2fr) minmax(0, 3fr); gap: 4px; }

.view { min-width: 0; min-height: 0; display: flex; flex-direction: column; border: 1px solid #a0a0a0; border-radius: 4px 4px 0 0; overflow: hidden; }
.lower .view { border-bottom: 0; }
.sidebar { margin-bottom: 1px; }

.tabs { flex: none; height: 23px; display: flex; border-bottom: 1px solid #a0a0a0; }
.tab { height: 23px; display: flex; align-items: center; gap: 4px; padding: 0 4px 0 3px; border-right: 1px solid #a0a0a0; }
.tab.active { background: #f0f0f0; border-top: 2px solid #707070; }
.tab.focused { background: #fff; border-top-color: #0078d7; padding-right: 7px; }
.view-buttons { margin-left: auto; display: flex; gap: 11px; padding: 3px 9px 0 0; }
.view-buttons svg { width: 12px; height: 12px; }

.actions { flex: none; height: 40px; display: flex; padding: 0 1px; overflow: hidden; }
.actions button { height: 38px; margin-top: 2px; display: flex; flex-direction: column; align-items: center; gap: 1px; padding: 2px 5px 0 4px; border: 1px solid transparent; }
.actions .pressed { background: #bfdcf3; border-color: #90c8f6; }
.actions .gap { width: 8px; }

/* Scenario tree */
.tree { flex: 1; min-height: 0; margin: 0 3px 1px 2px; overflow: hidden; background: #fff; border: 1px solid #696969; border-right: 0; }
.row { height: 18px; display: flex; align-items: center; padding-left: 5px; }
.row span { padding: 0 3px 0 5px; line-height: 18px; }
.twist { width: 10px; height: 10px; margin-right: 3px; color: #404040; }
.tree ul ul { padding-left: 16px; }
.leaf { padding-left: 18px; }
.selected { width: max-content; background: #cce8ff; margin-left: 16px; padding-left: 2px; }

/* Map */
.map-view .actions { padding: 0 2px; }
.canvas { flex: 1; min-height: 0; margin: 0 2px 1px 3px; display: flex; overflow: hidden; background: #fff; border: 1px solid #c8c8c8; }
.palette { flex: none; width: 42px; display: flex; flex-direction: column; align-items: center; padding: 4px 6px 0 0; background: #f0f0f0; }
.palette button { flex: none; width: 24px; height: 24px; margin-bottom: 5px; display: grid; place-items: center; border: 1px solid transparent; }
.palette .prim { height: 19px; margin-bottom: 0; }
.palette .prim:nth-child(4) { margin-bottom: 3px; }
.palette .chosen { border-color: #6a6ab4; background: #d4d4d4; }
.wide { width: 20px; height: 8px; }
.green { color: #1c9a2c; }
.indigo { color: #3a3aff; }
.mine { flex: 1; min-width: 0; width: 100%; height: 100%; }
.road, .thin, .soft-blue, .line-blue, .dots { fill: none; stroke-linejoin: round; }
.road { stroke: #dadada; stroke-width: 5; }
.thin { stroke: #8c8c8c; stroke-width: 2; }
.soft-blue { stroke: #d0d0ff; stroke-width: 5; }
.line-blue { stroke: #8080ff; stroke-width: 3; }
.dots { stroke: #7878b4; stroke-width: 6; stroke-linecap: round; }

/* Scrollable areas */
.scroller { flex: 1; min-width: 0; min-height: 0; display: grid; grid-template-columns: minmax(0, 1fr) 17px; grid-template-rows: minmax(0, 1fr) 16px; }
.viewport { overflow: hidden; background: #fff; }
.vbar { display: flex; flex-direction: column; align-items: center; padding: 5px 0; color: #505050; }
.hbar { display: flex; align-items: center; padding: 0 3px; color: #505050; }
.vbar svg, .hbar svg { width: 10px; height: 10px; }
.flip { transform: rotate(180deg); }
.west { transform: rotate(90deg); }
.east { transform: rotate(-90deg); }
.track { flex: 1; display: flex; }
.vbar .track { width: 15px; }
.hbar .track { height: 15px; margin: 0 4px; }
.track i { background: #cdcdcd; }
.vbar .track i { width: 15px; }

/* Stopes list */
.list-tools { height: 29px; padding: 0 5px 2px; }
.list-tools .space { width: 1px; }
.table-scroller { padding: 0 7px 7px; }
.table-scroller .vbar .track { padding: 3px 0; }
.table-scroller .vbar .track i { height: 21%; }
.table-scroller .hbar .track i { width: 24%; }
table { width: 100%; border-collapse: separate; border-spacing: 0; table-layout: fixed; }
th, td { padding: 0 0 0 6px; text-align: left; font-weight: 400; white-space: nowrap; overflow: hidden; border-right: 1px solid #e8e8e8; }
th { height: 24px; width: 150px; }
th:last-child { width: auto; }
td { height: 19px; line-height: 18px; border-bottom: 1px solid #f0f0f0; }
.current td { background: #d9d9d9; border-right-color: #f0f0f0; }

/* Properties */
.props { flex: 1; min-height: 0; display: flex; flex-direction: column; padding: 2px 1px 1px 2px; }
.props h2 { flex: none; margin: 0; height: 25px; padding-left: 5px; font: 400 20px/26px "DejaVu Sans", sans-serif; color: #000080; background: #fafafa; }
.props-body { flex: 1; min-height: 0; display: flex; }
.pages { flex: none; width: 120px; display: flex; flex-direction: column; gap: 2px; padding: 1px 1px 0; }
.pages button { height: 19px; line-height: 17px; border: 1px solid #adadad; }
.pages .on { background: #fff; }
.form { display: grid; grid-template-columns: 166px minmax(0, 1fr) 29px; grid-auto-rows: 21px; row-gap: 5px; padding: 1px 0 0 3px; align-content: start; }
.form label { line-height: 21px; }
.form input { width: 100%; height: 21px; padding: 0 5px; border: 1px solid #7a7a7a; border-radius: 0; background: #fff; }
.form input:disabled { color: #6d6d6d; background: #f0f0f0; border-color: #ccc; }
.pick { width: 20px; height: 20px; margin-left: 4px; display: grid; place-items: center; border: 1px solid #adadad; background: #e1e1e1; }
.form-scroller .vbar .track { padding: 2px 0; }
.form-scroller .vbar .track i { height: 42%; }
.form-scroller .hbar .track i { width: 70%; }
```
